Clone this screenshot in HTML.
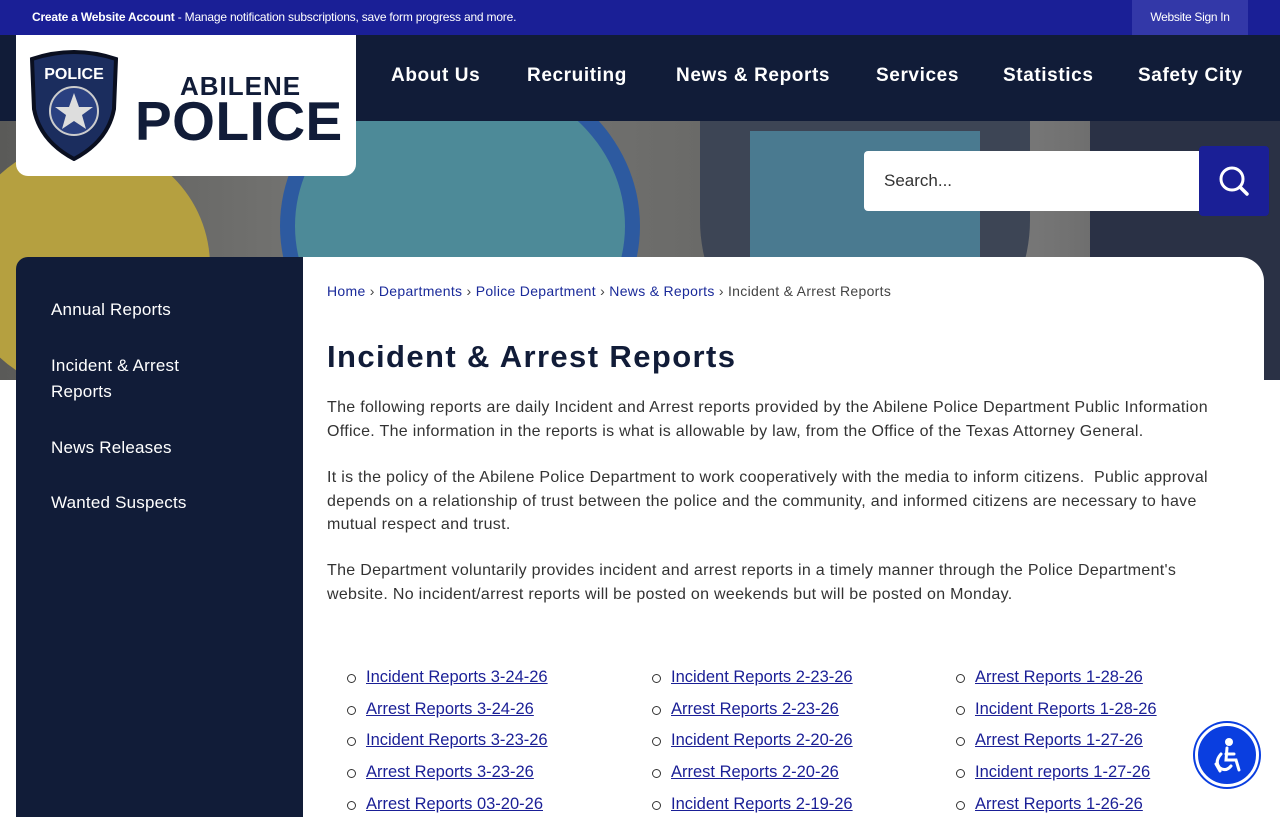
<!DOCTYPE html>
<html><head><meta charset="utf-8"><style>
*{margin:0;padding:0;box-sizing:border-box}
body{width:1280px;height:800px;overflow:hidden;background:#fff;font-family:"Liberation Sans",sans-serif;position:relative}
.top{position:absolute;left:0;top:0;width:1280px;height:35px;background:#1a1f96;color:#fff;font-size:12px;z-index:3}
.top .l{position:absolute;left:32px;top:10px;letter-spacing:-0.2px}
.top .r{position:absolute;left:1132px;top:0;width:116px;height:35px;background:#3338a8;font-size:12px;text-align:center;line-height:35px;letter-spacing:-0.3px}
.nav{position:absolute;left:0;top:35px;width:1280px;height:86px;background:#111c38;z-index:2}
.nav a{position:absolute;top:30px;color:#fff;font-weight:bold;font-size:19px;text-decoration:none;letter-spacing:0.6px}
.hero{position:absolute;left:0;top:121px;width:1280px;height:259px;overflow:hidden;background:linear-gradient(90deg,#5a5a58,#7a7a78 30%,#6a6a68 55%,#808080 75%,#555 100%)}
.logo{position:absolute;left:16px;top:35px;width:340px;height:141px;background:#fff;border-radius:0 0 12px 12px;z-index:4}
.search{position:absolute;left:864px;top:151px;width:336px;height:60px;background:#fff;border-radius:4px 0 0 4px;font-size:17px;color:#333;padding:20px 20px}
.sbtn{position:absolute;left:1199px;top:146px;width:70px;height:70px;background:#1a1f96;border-radius:4px}
.side{position:absolute;left:16px;top:257px;width:287px;height:560px;background:#111c38;border-radius:12px 0 0 0}
.side div{position:absolute;left:35px;color:#fff;font-size:17px;line-height:26px;letter-spacing:0.2px}
.main{position:absolute;left:303px;top:257px;width:961px;height:560px;background:#fff;border-radius:0 24px 0 0}
.bc{position:absolute;left:24px;top:26px;font-size:14px;color:#444;letter-spacing:0.3px}
.bc a{color:#1a2a9a;text-decoration:none}
h1{position:absolute;left:24px;top:82px;font-size:31px;color:#111c38;font-weight:bold;letter-spacing:1.4px}
.p{position:absolute;left:24px;width:900px;font-size:16px;line-height:23.5px;color:#333;letter-spacing:0.3px}
.col{position:absolute;top:411px;font-size:16.5px}
.col div{height:31.7px;position:relative;padding-left:40px}
.col div:before{content:"";position:absolute;left:21px;top:6px;width:7px;height:7px;border:1px solid #333;border-radius:50%}
.col a{color:#1a1f96;text-decoration:underline}
.acc{position:absolute;left:1195px;top:723px;width:64px;height:64px;border-radius:50%;background:#0a3ee0;border:3px solid #fff;box-shadow:0 0 0 2px #0a3ee0}
</style></head><body>
<div class="top"><span class="l"><b>Create a Website Account</b> - Manage notification subscriptions, save form progress and more.</span><div class="r">Website Sign In</div></div>
<div class="nav">
<a style="left:391px">About Us</a><a style="left:527px">Recruiting</a><a style="left:676px">News &amp; Reports</a><a style="left:876px">Services</a><a style="left:1003px">Statistics</a><a style="left:1138px">Safety City</a>
</div>
<div class="hero">
<div style="position:absolute;left:-40px;top:20px;width:250px;height:250px;border-radius:50%;background:#b5a040"></div>
<div style="position:absolute;left:280px;top:-60px;width:360px;height:330px;border-radius:50%;background:#2d5aa0"></div>
<div style="position:absolute;left:295px;top:-45px;width:330px;height:300px;border-radius:50%;background:#4d8a98"></div>
<div style="position:absolute;left:700px;top:0;width:330px;height:259px;background:#3d4555;border-radius:0 0 160px 160px"></div>
<div style="position:absolute;left:750px;top:10px;width:230px;height:240px;background:#4a7a90;border-radius:0 0 110px 110px"></div>
<div style="position:absolute;left:1090px;top:0;width:200px;height:259px;background:#2a3145"></div>
</div>
<div class="logo">
<svg style="position:absolute;left:12px;top:14px" width="92" height="112" viewBox="0 0 92 112"><path d="M4 10 Q46 -4 88 10 L86 60 Q80 92 46 110 Q12 92 6 60 Z" fill="#1b2d5e" stroke="#0a0f20" stroke-width="4"/><text x="46" y="30" fill="#fff" font-size="16" font-weight="bold" text-anchor="middle" font-family="Liberation Sans">POLICE</text><circle cx="46" cy="62" r="24" fill="#2a4080" stroke="#ccc" stroke-width="2"/><polygon points="46,44 51,58 65,58 54,66 58,80 46,72 34,80 38,66 27,58 41,58" fill="#ddd"/></svg>
<div style="position:absolute;left:164px;top:36px;font-size:26px;font-weight:bold;color:#111c38;letter-spacing:1px">ABILENE</div>
<div style="position:absolute;left:119px;top:54px;font-size:55px;font-weight:bold;color:#111c38;letter-spacing:0.5px">POLICE</div>
</div>
<div class="search">Search...</div>
<div class="sbtn"><svg width="70" height="70" viewBox="0 0 70 70"><circle cx="33" cy="33" r="11" fill="none" stroke="#fff" stroke-width="3"/><path d="M41 41l7 7" stroke="#fff" stroke-width="3.5" stroke-linecap="round"/></svg></div>
<div class="side">
<div style="top:40px">Annual Reports</div>
<div style="top:96px">Incident &amp; Arrest<br>Reports</div>
<div style="top:178px">News Releases</div>
<div style="top:233px">Wanted Suspects</div>
</div>
<div class="main">
<div class="bc"><a>Home</a> › <a>Departments</a> › <a>Police Department</a> › <a>News &amp; Reports</a> › Incident &amp; Arrest Reports</div>
<h1>Incident &amp; Arrest Reports</h1>
<div class="p" style="top:139px">The following reports are daily Incident and Arrest reports provided by the Abilene Police Department Public Information Office. The information in the reports is what is allowable by law, from the Office of the Texas Attorney General.</div>
<div class="p" style="top:209px">It is the policy of the Abilene Police Department to work cooperatively with the media to inform citizens.&nbsp; Public approval depends on a relationship of trust between the police and the community, and informed citizens are necessary to have mutual respect and trust.</div>
<div class="p" style="top:302px">The Department voluntarily provides incident and arrest reports in a timely manner through the Police Department's website. No incident/arrest reports will be posted on weekends but will be posted on Monday.</div>
<div class="col" style="left:23px"><div><a>Incident Reports 3-24-26</a></div><div><a>Arrest Reports 3-24-26</a></div><div><a>Incident Reports 3-23-26</a></div><div><a>Arrest Reports 3-23-26</a></div><div><a>Arrest Reports 03-20-26</a></div></div>
<div class="col" style="left:328px"><div><a>Incident Reports 2-23-26</a></div><div><a>Arrest Reports 2-23-26</a></div><div><a>Incident Reports 2-20-26</a></div><div><a>Arrest Reports 2-20-26</a></div><div><a>Incident Reports 2-19-26</a></div></div>
<div class="col" style="left:632px"><div><a>Arrest Reports 1-28-26</a></div><div><a>Incident Reports 1-28-26</a></div><div><a>Arrest Reports 1-27-26</a></div><div><a>Incident reports 1-27-26</a></div><div><a>Arrest Reports 1-26-26</a></div></div>
</div>
<div class="acc"><svg width="58" height="58" viewBox="0 0 58 58"><circle cx="31" cy="16" r="4" fill="#fff"/><path d="M29 22 L28 34 L38 34 L41 44 M28 28 L36 28 M23 28 Q16 36 22 42 Q28 46 33 40 M18 38 L22 45" stroke="#fff" stroke-width="3" fill="none" stroke-linecap="round"/></svg></div>
</body></html>
